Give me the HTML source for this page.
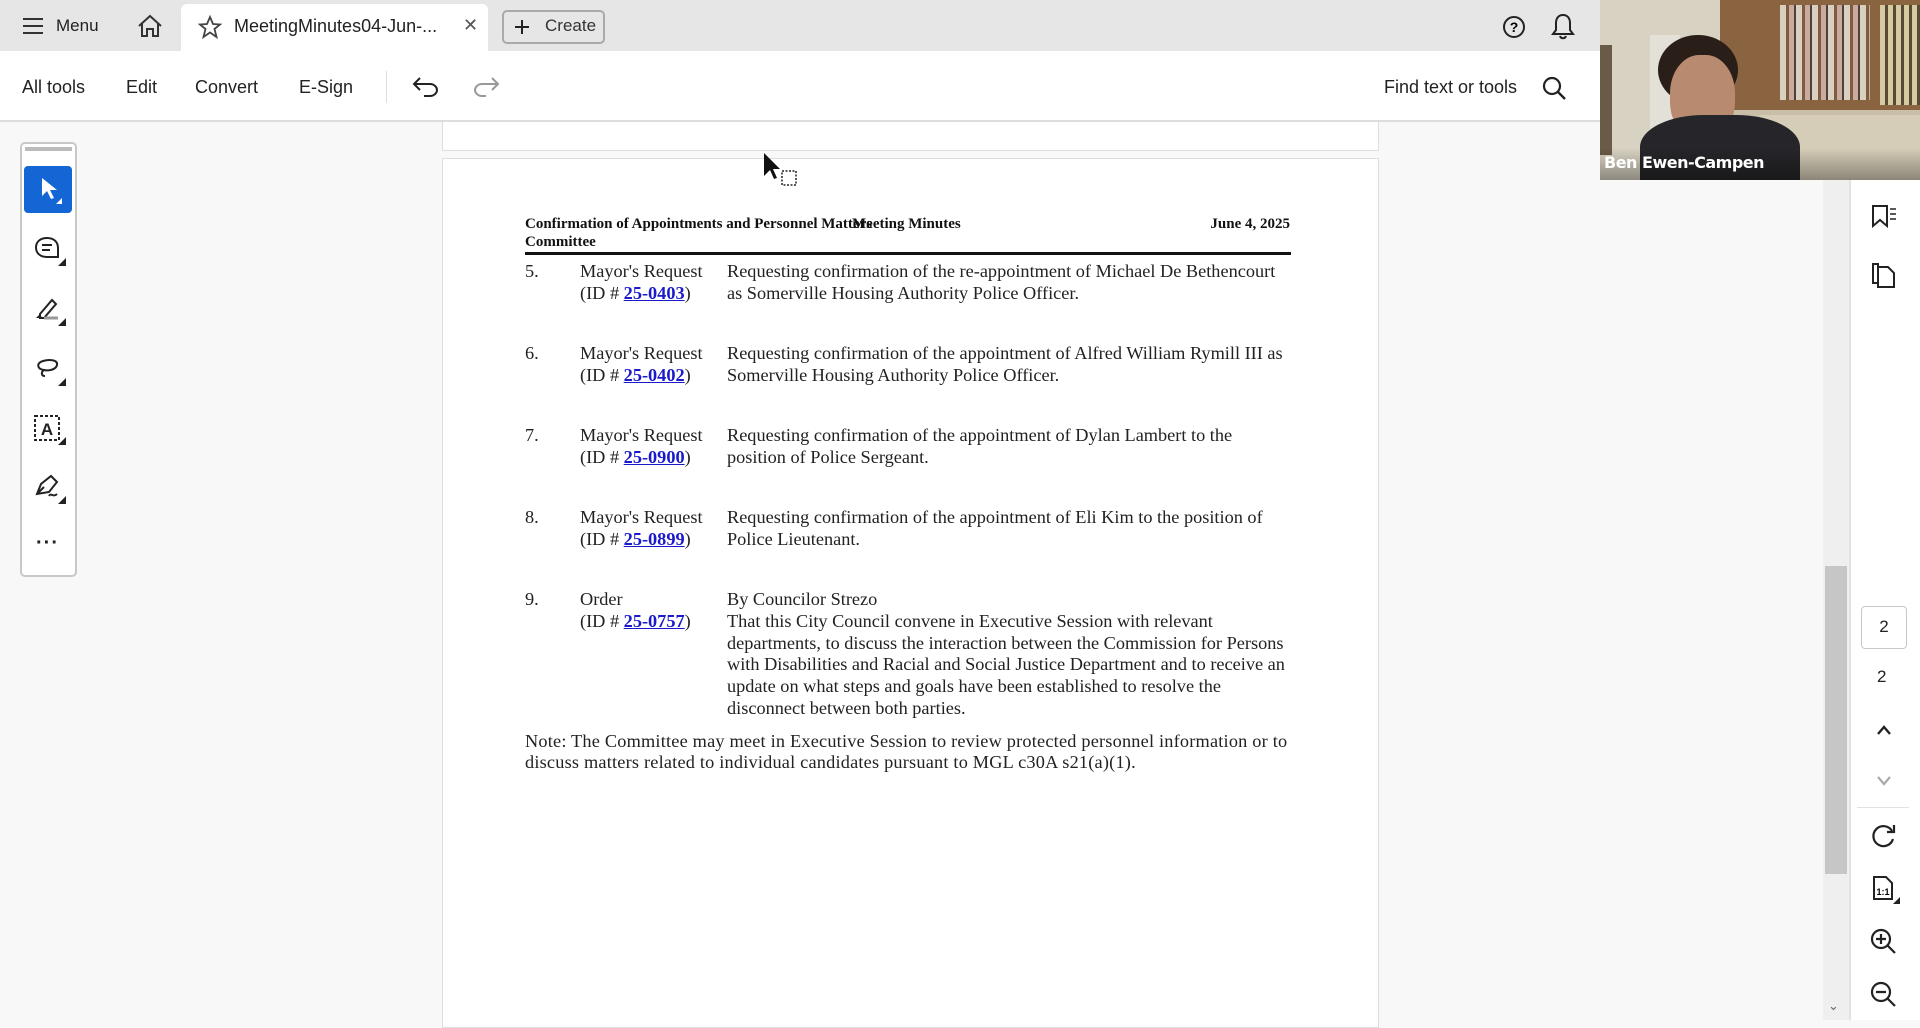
<!DOCTYPE html>
<html><head><meta charset="utf-8"><style>
*{margin:0;padding:0;box-sizing:border-box}
body{width:1920px;height:1020px;overflow:hidden;background:#f8f8f8;font-family:"Liberation Sans",sans-serif;position:relative;color:#222}
.a{position:absolute;white-space:nowrap}
.s{font-family:"Liberation Serif",serif;font-size:18.3px;line-height:22px;color:#222}
.s a{color:#1a1acc;font-weight:bold;text-decoration:underline}
.ui{font-size:18px;color:#222}
.h{font-family:'Liberation Serif',serif;font-weight:bold;font-size:15px;line-height:18px;color:#111}
svg{position:absolute;overflow:visible}
</style></head><body>
<div class="a" style="left:0;top:0;width:1600px;height:51px;background:#e6e6e6"></div>
<div class="a" style="left:181px;top:4px;width:307px;height:47px;background:#fff;border-radius:6px 6px 0 0"></div>
<svg style="left:22px;top:17px" width="22" height="18"><path d="M1 2H21M1 9H21M1 16H21" stroke="#333" stroke-width="2"/></svg>
<div class="a ui" style="left:56px;top:16px;font-size:17px">Menu</div>
<svg style="left:137px;top:14px" width="26" height="24"><path d="M2 12L13 2 24 12M5 9V22H10V15H16V22H21V9" fill="none" stroke="#333" stroke-width="2"/></svg>
<svg style="left:198px;top:16px" width="24" height="22"><path d="M12 1L15 8 22 8.5 16.5 13 18.5 21 12 16.5 5.5 21 7.5 13 2 8.5 9 8Z" fill="none" stroke="#444" stroke-width="1.8"/></svg>
<div class="a ui" style="left:234px;top:16px;font-size:18px">MeetingMinutes04-Jun-...</div>
<div class="a ui" style="left:463px;top:15px;font-size:18px;color:#555">✕</div>
<div class="a" style="left:502px;top:10px;width:103px;height:34px;border:2px solid #aaa;border-radius:5px"></div>
<svg style="left:514px;top:19px" width="16" height="16"><path d="M8 1V15M1 8H15" stroke="#222" stroke-width="2"/></svg>
<div class="a ui" style="left:545px;top:16px;font-size:17px;color:#333">Create</div>
<svg style="left:1502px;top:15px" width="24" height="24"><circle cx="12" cy="12" r="10" fill="none" stroke="#222" stroke-width="2"/><text x="12" y="17" font-size="14" font-weight="bold" text-anchor="middle" font-family="Liberation Sans">?</text></svg>
<svg style="left:1551px;top:13px" width="24" height="28"><path d="M12 2C7 2 5 6 5 10V17L2 21H22L19 17V10C19 6 17 2 12 2ZM9 23C10 26 14 26 15 23" fill="none" stroke="#222" stroke-width="2"/></svg>
<div class="a" style="left:0;top:51px;width:1600px;height:71px;background:#fff;border-bottom:2px solid #ddd"></div>
<div class="a ui" style="left:22px;top:77px">All tools</div>
<div class="a ui" style="left:126px;top:77px">Edit</div>
<div class="a ui" style="left:195px;top:77px">Convert</div>
<div class="a ui" style="left:299px;top:77px">E-Sign</div>
<div class="a" style="left:386px;top:71px;width:1px;height:32px;background:#ddd"></div>
<svg style="left:412px;top:76px" width="28" height="22"><path d="M8 2L2 8 8 14M2 8H18C22 8 25 11 25 14S22 20 18 20H12" fill="none" stroke="#222" stroke-width="2"/></svg>
<svg style="left:472px;top:76px" width="28" height="22"><path d="M20 2L26 8 20 14M26 8H10C6 8 3 11 3 14S6 20 10 20H14" fill="none" stroke="#999" stroke-width="2"/></svg>
<div class="a ui" style="left:1384px;top:77px">Find text or tools</div>
<svg style="left:1542px;top:76px" width="24" height="24"><circle cx="10" cy="10" r="8" fill="none" stroke="#222" stroke-width="2.2"/><path d="M16 16L23 23" stroke="#222" stroke-width="2.4"/></svg>
<div class="a" style="left:1600px;top:0;width:320px;height:180px;background:#c9bfa8;overflow:hidden">
 <div class="a" style="left:0;top:0;width:130px;height:180px;background:#d8d2c2"></div>
 <div class="a" style="left:0;top:45px;width:12px;height:110px;background:#6a5a48"></div>
 <div class="a" style="left:50px;top:35px;width:30px;height:110px;background:#e3e0d8"></div>
 <div class="a" style="left:120px;top:0;width:200px;height:110px;background:#8a6440"></div>
 <div class="a" style="left:180px;top:5px;width:90px;height:95px;background:repeating-linear-gradient(90deg,#d9d0c0 0 6px,#7e5d3e 6px 9px,#c9a9a0 9px 14px,#4c4038 14px 16px)"></div>
 <div class="a" style="left:280px;top:5px;width:40px;height:100px;background:repeating-linear-gradient(90deg,#d8caa0 0 5px,#594a38 5px 8px)"></div>
 <div class="a" style="left:160px;top:115px;width:160px;height:65px;background:#d6cdb8"></div>
 <div class="a" style="left:58px;top:35px;width:80px;height:70px;border-radius:50%;background:#2a1e18"></div>
 <div class="a" style="left:70px;top:55px;width:65px;height:85px;border-radius:45%;background:#b88a70"></div>
 <div class="a" style="left:40px;top:115px;width:160px;height:80px;border-radius:40% 40% 0 0;background:#26262a"></div>
 <div class="a" style="left:0;top:148px;width:320px;height:32px;background:linear-gradient(transparent,rgba(0,0,0,.35))"></div>
 <div class="a" style="left:4px;top:153px;color:#fff;font-size:16px;font-weight:bold;font-family:'DejaVu Sans',sans-serif;letter-spacing:-.5px">Ben Ewen-Campen</div>
</div>
<div class="a" style="left:20px;top:142px;width:57px;height:435px;background:#fff;border:2px solid #c8c8c8;border-radius:5px"></div>
<div class="a" style="left:25px;top:147px;width:47px;height:4px;background:#bbb"></div>
<div class="a" style="left:24px;top:166px;width:48px;height:47px;background:#1466d4;border-radius:4px"></div>
<svg style="left:40px;top:176px" width="24" height="30"><path d="M2 2V20L7 15 11 23 14 22 10 14H17Z" fill="#fff"/><path d="M22 22V28H16Z" fill="#fff"/></svg>
<svg style="left:34px;top:236px" width="34" height="30"><path d="M13 2C20 2 24 6 24 12V21H13C6 21 2 17 2 11.5S6 2 13 2Z" fill="none" stroke="#222" stroke-width="2"/><path d="M8 9H18M8 14H16" stroke="#222" stroke-width="2"/><path d="M32 22V30H24Z" fill="#222"/></svg>
<svg style="left:34px;top:296px" width="34" height="30"><path d="M6 18L18 4 22 8 10 22H6Z" fill="none" stroke="#222" stroke-width="2"/><path d="M2 22L6 18 8 22Z" fill="#222"/><path d="M10 22H24" stroke="#999" stroke-width="3"/><path d="M32 22V30H24Z" fill="#222"/></svg>
<svg style="left:34px;top:356px" width="34" height="30"><path d="M10 14C3 13 2 7 9 5S24 4 23 9 14 15 10 14C7 16 7 20 11 20" fill="none" stroke="#222" stroke-width="2"/><path d="M32 22V30H24Z" fill="#222"/></svg>
<svg style="left:33px;top:414px" width="34" height="32"><rect x="2" y="2" width="24" height="24" fill="none" stroke="#222" stroke-width="2" stroke-dasharray="3 2"/><text x="14" y="21" font-size="17" font-weight="bold" text-anchor="middle" font-family="Liberation Sans" fill="#222">A</text><path d="M33 23V31H25Z" fill="#222"/></svg>
<svg style="left:33px;top:474px" width="34" height="30"><path d="M4 20L8 10 18 2 24 8 16 18Z" fill="none" stroke="#222" stroke-width="2"/><path d="M4 20L11 13" stroke="#222" stroke-width="2"/><path d="M16 22C18 18 20 24 24 20" fill="none" stroke="#222" stroke-width="2"/><path d="M33 22V30H25Z" fill="#222"/></svg>
<div class="a" style="left:36px;top:532px;font-size:20px;font-weight:bold;letter-spacing:1px">···</div>
<div class="a" style="left:442px;top:122px;width:937px;height:29px;background:#fff;border:1px solid #ddd;border-top:none"></div>
<div class="a" style="left:442px;top:158px;width:937px;height:870px;background:#fff;border:1px solid #ddd"></div>
<svg style="left:763px;top:152px" width="40" height="40"><path d="M1 1V24L7 18 11 27 14 26 10 17H17Z" fill="#111"/><rect x="19" y="19" width="14" height="14" fill="none" stroke="#222" stroke-width="1.5" stroke-dasharray="2 1.5"/></svg>
<div class="a h" style="left:525px;top:215px">Confirmation of Appointments and Personnel Matters<br>Committee</div>
<div class="a h" style="left:852px;top:215px">Meeting Minutes</div>
<div class="a h" style="right:630px;top:215px">June 4, 2025</div>
<div class="a" style="left:525px;top:252px;width:766px;height:3px;background:#111"></div>

<div class="a s" style="left:525px;top:260px">5.</div>
<div class="a s" style="left:580px;top:260px">Mayor's Request<br>(ID # <a>25-0403</a>)</div>
<div class="a s" style="left:727px;top:260px">Requesting confirmation of the re-appointment of Michael De Bethencourt<br>as Somerville Housing Authority Police Officer.</div>

<div class="a s" style="left:525px;top:342px">6.</div>
<div class="a s" style="left:580px;top:342px">Mayor's Request<br>(ID # <a>25-0402</a>)</div>
<div class="a s" style="left:727px;top:342px">Requesting confirmation of the appointment of Alfred William Rymill III as<br>Somerville Housing Authority Police Officer.</div>

<div class="a s" style="left:525px;top:424px">7.</div>
<div class="a s" style="left:580px;top:424px">Mayor's Request<br>(ID # <a>25-0900</a>)</div>
<div class="a s" style="left:727px;top:424px">Requesting confirmation of the appointment of Dylan Lambert to the<br>position of Police Sergeant.</div>

<div class="a s" style="left:525px;top:506px">8.</div>
<div class="a s" style="left:580px;top:506px">Mayor's Request<br>(ID # <a>25-0899</a>)</div>
<div class="a s" style="left:727px;top:506px">Requesting confirmation of the appointment of Eli Kim to the position of<br>Police Lieutenant.</div>

<div class="a s" style="left:525px;top:588px">9.</div>
<div class="a s" style="left:580px;top:588px">Order<br>(ID # <a>25-0757</a>)</div>
<div class="a s" style="left:727px;top:589px;line-height:21.8px">By Councilor Strezo<br>That this City Council convene in Executive Session with relevant<br>departments, to discuss the interaction between the Commission for Persons<br>with Disabilities and Racial and Social Justice Department and to receive an<br>update on what steps and goals have been established to resolve the<br>disconnect between both parties.</div>

<div class="a s" style="left:525px;top:731px;line-height:21px;letter-spacing:.2px">Note: The Committee may meet in Executive Session to review protected personnel information or to<br>discuss matters related to individual candidates pursuant to MGL c30A s21(a)(1).</div>

<div class="a" style="left:1823px;top:180px;width:26px;height:840px;background:#efefef"></div>
<div class="a" style="left:1825px;top:566px;width:22px;height:308px;background:#c6c6c6"></div>
<div class="a" style="left:1828px;top:998px;font-size:13px;color:#666">⌄</div>
<div class="a" style="left:1849px;top:180px;width:71px;height:840px;background:#fff;border-left:2px solid #e2e2e2"></div>
<svg style="left:1870px;top:204px" width="28" height="26"><path d="M3 2H17V22L10 16 3 22Z" fill="none" stroke="#222" stroke-width="2"/><path d="M20 5H26M20 10H26M20 15H26" stroke="#222" stroke-width="1.6"/></svg>
<svg style="left:1871px;top:261px" width="26" height="28"><path d="M7 6V3H2V22H7" fill="none" stroke="#222" stroke-width="2"/><path d="M7 6H17L23 12V26H7Z" fill="none" stroke="#222" stroke-width="2"/></svg>
<div class="a" style="left:1861px;top:606px;width:46px;height:43px;border:1.5px solid #c8c8c8;border-radius:4px;text-align:center;line-height:40px;font-size:17px">2</div>
<div class="a" style="left:1877px;top:667px;font-size:17px">2</div>
<svg style="left:1876px;top:724px" width="16" height="12"><path d="M2 10L8 3 14 10" fill="none" stroke="#222" stroke-width="2.4"/></svg>
<svg style="left:1876px;top:774px" width="16" height="12"><path d="M2 3L8 10 14 3" fill="none" stroke="#aaa" stroke-width="2.2"/></svg>
<div class="a" style="left:1857px;top:807px;width:52px;height:1px;background:#e2e2e2"></div>
<svg style="left:1871px;top:823px" width="26" height="26"><path d="M21 8A10 10 0 1 0 22 16" fill="none" stroke="#222" stroke-width="2.2"/><path d="M23 2V9H16" fill="none" stroke="#222" stroke-width="2.2"/></svg>
<svg style="left:1871px;top:875px" width="30" height="30"><path d="M3 2H15L21 8V24H3Z" fill="none" stroke="#222" stroke-width="2"/><text x="12" y="20" font-size="9" font-weight="bold" text-anchor="middle" font-family="Liberation Sans">1:1</text><path d="M29 22V29H22Z" fill="#222"/></svg>
<svg style="left:1870px;top:928px" width="28" height="28"><circle cx="11" cy="11" r="9" fill="none" stroke="#222" stroke-width="2.2"/><path d="M17.5 17.5L25 25M6 11H16M11 6V16" stroke="#222" stroke-width="2.2"/></svg>
<svg style="left:1870px;top:981px" width="28" height="28"><circle cx="11" cy="11" r="9" fill="none" stroke="#222" stroke-width="2.2"/><path d="M17.5 17.5L25 25M6 11H16" stroke="#222" stroke-width="2.2"/></svg>
</body></html>
